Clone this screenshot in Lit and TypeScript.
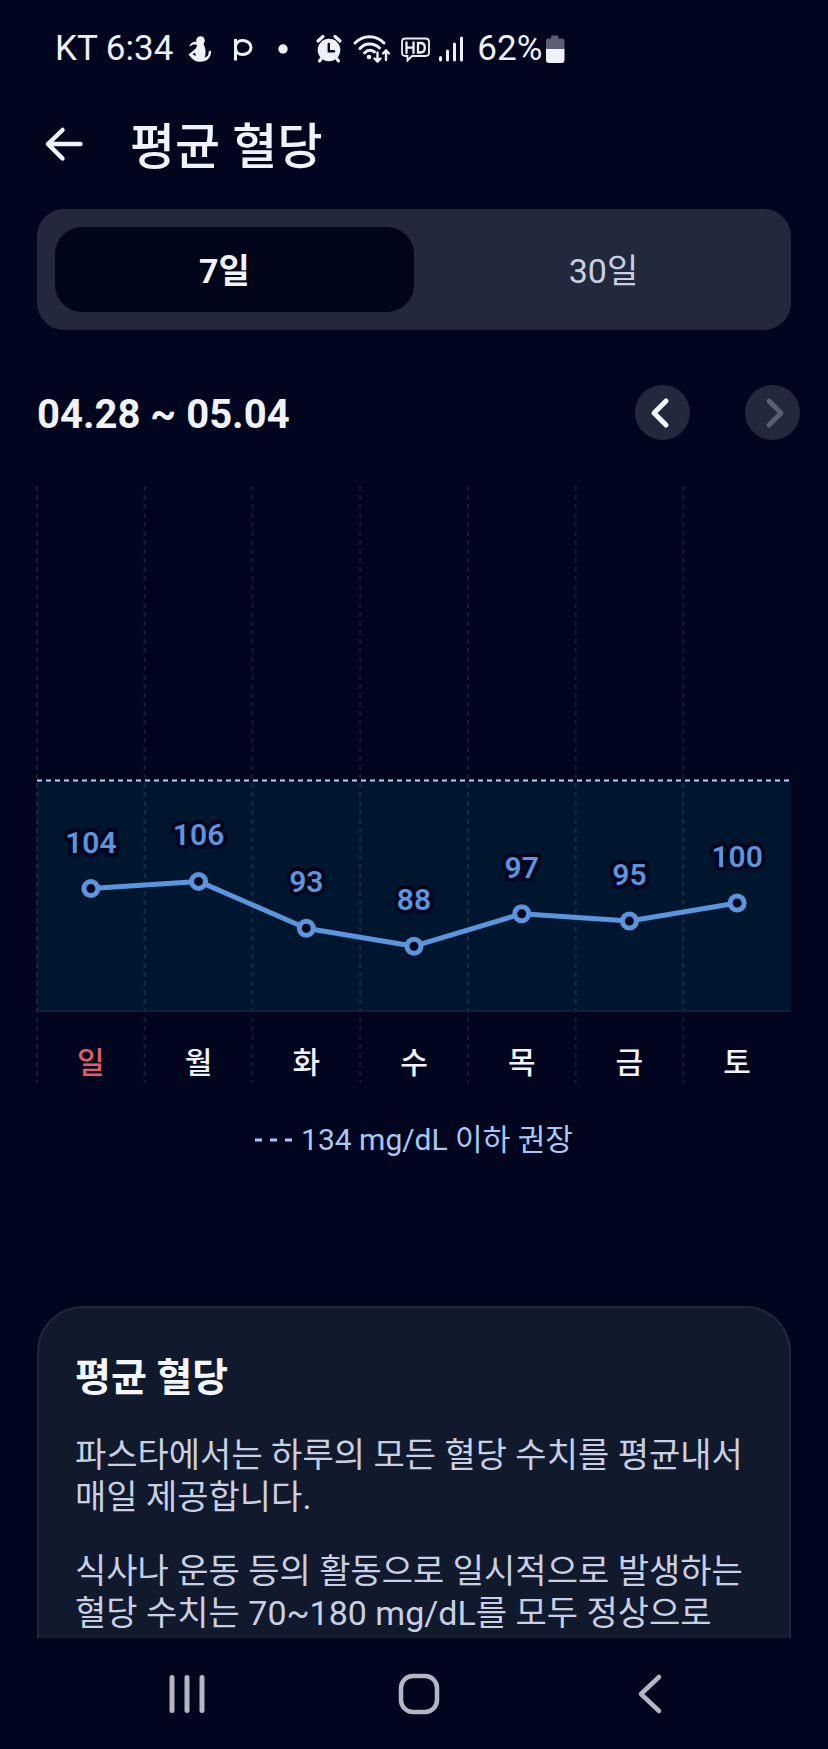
import { LitElement, html, svg, css } from "lit";
import { customElement, state } from "lit/decorators.js";
import { classMap } from "lit/directives/class-map.js";

interface Reading {
  day: string;
  value: number;
  holiday?: boolean;
}

const WEEK: Reading[] = [
  { day: "일", value: 104, holiday: true },
  { day: "월", value: 106 },
  { day: "화", value: 93 },
  { day: "수", value: 88 },
  { day: "목", value: 97 },
  { day: "금", value: 95 },
  { day: "토", value: 100 },
];

const LIMIT = 134;
const FLOOR = 70;
const UNIT = 3.6;
const BASELINE = 526;
const CHART_HEIGHT = 598;

const yOf = (value: number) => BASELINE - (value - FLOOR) * UNIT;

@customElement("status-bar")
export class StatusBar extends LitElement {
  static styles = css`
    :host {
      display: flex;
      align-items: center;
      height: 98px;
      padding-left: 55px;
      font-size: 35px;
      line-height: 40px;
      color: #eef0fa;
    }
    svg {
      display: block;
      flex: none;
    }
    .clock {
      margin-right: 12px;
    }
    .apps {
      margin-right: 26px;
    }
    .signals {
      margin-right: 12px;
    }
  `;

  render() {
    return html`
      <span class="clock">KT 6:34</span>
      <svg class="apps" width="104" height="32" viewBox="0 0 104 32" fill="currentColor" aria-hidden="true">
        <circle cx="15.500" cy="7.500" r="4.300" />
        <path d="M12 12C9 11 7 11.500 5.500 13.500L4.500 12.500C6 9.500 9 8 12 9L18.500 10.500C19.500 13.500 21 16 20.500 20C20.500 22 20 23.500 19.500 24.500C22.500 24 24 21.500 23.500 18.500L26 17.500C26.500 22.500 24 26.500 20 28C16 29.500 11 29 7.500 26L3.500 21.500L9 17C10.500 16 12 14 12 12Z" />
        <path d="M7.500 21.500L10 19.500L11 23Z" fill="#01051d" />
        <path d="M50.500 6V27.500M50.500 14.500C50.500 10 53.500 7.500 57.500 7.500C62.300 7.500 66 10.500 66 14.500C66 18.500 62.300 21.500 57.500 21.500C53.500 21.500 50.500 19 50.500 14.500Z" fill="none" stroke="currentColor" stroke-width="3" />
        <circle cx="98" cy="16" r="4.700" />
      </svg>
      <svg class="signals" width="150" height="32" viewBox="0 0 150 32" fill="none" stroke="currentColor" stroke-linecap="round" aria-hidden="true">
        <circle cx="14" cy="17" r="11.300" fill="currentColor" stroke="none" />
        <path d="M3 8L8 3.500M20 3.500L25 8M6 26L4.500 28M22 26L23.500 28" stroke-width="3.200" />
        <path d="M13.800 11V18.200H19" stroke="#01051d" stroke-width="2.400" />
        <path d="M40 10C48 1.500 61 1.500 69 10M45 15.500C50 9.500 59 9.500 64.500 15M49.500 20C52.500 16.800 56 16.500 59.500 19" stroke-width="3" />
        <circle cx="54" cy="24" r="2.300" fill="currentColor" stroke="none" />
        <path d="M62.500 19.500V28M59.500 25.500L62.500 28.500L65.500 25.500M71 27V18M68 20.500L71 17.500L74 20.500" stroke-width="2.400" />
        <path d="M90.500 5.500H110.500C112.700 5.500 114 6.800 114 9V19.500C114 21.700 112.700 23 110.500 23H97L92.500 27.500V23H90.500C88.300 23 87 21.700 87 19.500V9C87 6.800 88.300 5.500 90.500 5.500Z" stroke-width="1.800" />
        <path d="M91.500 9.500V20M98.500 9.500V20M91.500 14.600H98.500M103 10V19.500H105.500C108.500 19.500 109.800 17.800 109.800 14.800C109.800 11.800 108.500 10 105.500 10Z" stroke-width="2.300" />
        <path d="M125.500 24.500V27M132.500 18V27M139.500 11V27M146.500 5V27" stroke-width="3" />
      </svg>
      <span>62%</span>
      <svg width="25" height="32" viewBox="0 0 25 32" aria-hidden="true">
        <path d="M6 5.500H9V4C9 3.200 9.500 2.500 10.500 2.500H15C16 2.500 16.500 3.200 16.500 4V5.500H20C21.500 5.500 22.500 6.500 22.500 8V16H4V8C4 6.500 4.800 5.500 6 5.500Z" fill="#5c5f72" />
        <path d="M4 16H22.500V27C22.500 29 21.500 30 19.500 30H7C5 30 4 29 4 27Z" fill="currentColor" />
      </svg>
    `;
  }
}

@customElement("glucose-chart")
export class GlucoseChart extends LitElement {
  static styles = css`
    :host {
      display: block;
    }
    .plot {
      display: block;
      width: 100%;
      overflow: visible;
    }
    .band {
      fill: #00162f;
    }
    .guide {
      stroke: #ffffff;
      stroke-opacity: 0.09;
      stroke-width: 2;
      stroke-dasharray: 5 4;
    }
    .base {
      stroke: #121e36;
      stroke-width: 2;
    }
    .limit {
      stroke: #b6d2fb;
      stroke-width: 2;
      stroke-dasharray: 5 4;
    }
    .segment {
      stroke: #5b95de;
      stroke-width: 5;
    }
    .dot {
      fill: #01051d;
      stroke: #5b95de;
      stroke-width: 5;
    }
    .value {
      font-size: 30px;
      font-weight: 600;
      fill: #5b95de;
      stroke: #01051d;
      stroke-width: 8;
      stroke-linejoin: round;
      paint-order: stroke;
      text-anchor: middle;
    }
    .day {
      font-size: 30px;
      font-weight: 500;
      fill: #f0f3fd;
      text-anchor: middle;
    }
    .holiday {
      fill: #e25c69;
    }
    .legend {
      display: flex;
      align-items: center;
      justify-content: center;
      gap: 8px;
      margin: 37px 0 0;
      font-size: 30px;
      line-height: 40px;
      color: #a8c9f8;
    }
  `;

  render() {
    const step = 100 / WEEK.length;
    const xOf = (i: number) => `${step * (i + 0.5)}%`;
    return html`
      <svg class="plot" height=${CHART_HEIGHT} role="img" aria-label="요일별 평균 혈당">
        <rect class="band" x="0" y=${yOf(LIMIT)} width="100%" height=${BASELINE - yOf(LIMIT)} />
        ${WEEK.map((_, i) => svg`<line class="guide" x1="${step * i}%" x2="${step * i}%" y1="1" y2=${CHART_HEIGHT} />`)}
        <line class="base" x1="0" x2="100%" y1=${BASELINE} y2=${BASELINE} />
        <line class="limit" x1="0" x2="100%" y1=${yOf(LIMIT)} y2=${yOf(LIMIT)} />
        ${WEEK.slice(1).map(
          (r, i) => svg`<line class="segment" x1=${xOf(i)} y1=${yOf(WEEK[i].value)} x2=${xOf(i + 1)} y2=${yOf(r.value)} />`
        )}
        ${WEEK.map(
          (r, i) => svg`
            <circle class="dot" cx=${xOf(i)} cy=${yOf(r.value)} r="7" />
            <text class="value" x=${xOf(i)} y=${yOf(r.value) - 36}>${r.value}</text>
            <text class=${classMap({ day: true, holiday: !!r.holiday })} x=${xOf(i)} y="588">${r.day}</text>
          `
        )}
      </svg>
      <p class="legend">
        <svg width="38" height="4" viewBox="0 0 38 4" aria-hidden="true">
          <path d="M0 2H38" stroke="currentColor" stroke-width="3" stroke-dasharray="7 8" />
        </svg>
        <span>${LIMIT} mg/dL 이하 권장</span>
      </p>
    `;
  }
}

@customElement("app-root")
export class AppRoot extends LitElement {
  static styles = css`
    :host {
      display: flex;
      flex-direction: column;
      height: 100vh;
      box-sizing: border-box;
      background: #01051d;
      color: #f0f3fd;
      font-family: Roboto, "Noto Sans CJK KR", sans-serif;
    }
    button {
      display: flex;
      align-items: center;
      justify-content: center;
      padding: 0;
      border: 0;
      background: none;
      color: inherit;
      font: inherit;
      cursor: pointer;
    }
    svg {
      display: block;
    }
    .appbar {
      display: flex;
      align-items: center;
      gap: 43px;
      height: 96px;
      padding: 0 37px;
    }
    h1 {
      margin: 0;
      padding-top: 4px;
      font-size: 49px;
      font-weight: 500;
      line-height: 64px;
    }
    main {
      flex: 1;
      min-height: 0;
      padding: 15px 37px 0;
      overflow-y: auto;
      scrollbar-width: none;
    }
    .tabs {
      display: grid;
      grid-template-columns: 1fr 1fr;
      padding: 18px;
      border-radius: 27px;
      background: #22293d;
    }
    .tab {
      height: 85px;
      padding: 0 0 2px 20px;
      border-radius: 27px;
      font-size: 34px;
      color: #c9d0e3;
    }
    .tab:first-child {
      padding: 0 20px 2px 0;
    }
    .tab.on {
      background: #01051a;
      color: #f0f3fd;
      font-weight: 700;
    }
    .period {
      display: flex;
      align-items: center;
      justify-content: space-between;
      margin: 55px -9px 45px 0;
    }
    h2 {
      margin: 0;
      padding-top: 4px;
      font-size: 40px;
      font-weight: 700;
      line-height: 48px;
    }
    .steps {
      display: flex;
      gap: 55px;
    }
    .step {
      width: 55px;
      height: 55px;
      border-radius: 50%;
      background: #22293d;
      color: #f3f6ff;
    }
    .step:disabled {
      color: #5a5f71;
      cursor: default;
    }
    .info {
      margin-top: 146px;
      padding: 46px 36px;
      border: 2px solid #1f273a;
      border-radius: 46px;
      background: #11192c;
      color: #c9d0e3;
      font-size: 34px;
      line-height: 42px;
      word-break: keep-all;
    }
    h3 {
      margin: 0 0 32px;
      font-size: 39px;
      font-weight: 700;
      line-height: 48px;
      color: #f3f6ff;
    }
    .info p {
      margin: 0 0 32px;
    }
    .nav {
      display: flex;
      justify-content: center;
      align-items: center;
      gap: 168px;
      height: 111px;
      padding-left: 10px;
      color: #b4b6c4;
    }
    .nav button {
      width: 64px;
      height: 64px;
    }
  `;

  @state() private range = 7;

  render() {
    return html`
      <status-bar></status-bar>
      <header class="appbar">
        <button aria-label="뒤로">
          <svg width="50" height="48" viewBox="0 0 50 48" fill="none" stroke="currentColor" stroke-width="4.500" stroke-linecap="round" stroke-linejoin="round" aria-hidden="true">
            <path d="M43.500 22H11M25.500 8L11 22L25.500 36.500" />
          </svg>
        </button>
        <h1>평균 혈당</h1>
      </header>
      <main>
        <div class="tabs" role="tablist">
          ${[7, 30].map(
            (days) => html`
              <button
                role="tab"
                aria-selected=${this.range === days}
                class=${classMap({ tab: true, on: this.range === days })}
                @click=${() => (this.range = days)}
              >
                ${days}일
              </button>
            `
          )}
        </div>
        <section class="period">
          <h2>04.28 ~ 05.04</h2>
          <div class="steps">
            <button class="step" aria-label="이전 주">
              <svg width="55" height="55" viewBox="0 0 55 55" fill="none" stroke="currentColor" stroke-width="5" stroke-linecap="round" stroke-linejoin="round" aria-hidden="true">
                <path d="M31 16L19 28L31 40" />
              </svg>
            </button>
            <button class="step" aria-label="다음 주" disabled>
              <svg width="55" height="55" viewBox="0 0 55 55" fill="none" stroke="currentColor" stroke-width="5" stroke-linecap="round" stroke-linejoin="round" aria-hidden="true">
                <path d="M24 16L36 28L24 40" />
              </svg>
            </button>
          </div>
        </section>
        <glucose-chart></glucose-chart>
        <article class="info">
          <h3>평균 혈당</h3>
          <p>파스타에서는 하루의 모든 혈당 수치를 평균내서 매일 제공합니다.</p>
          <p>식사나 운동 등의 활동으로 일시적으로 발생하는 혈당 수치는 70~180 mg/dL를 모두 정상으로</p>
        </article>
      </main>
      <nav class="nav">
        <button aria-label="최근 앱">
          <svg width="64" height="64" viewBox="0 0 64 64" fill="none" stroke="currentColor" stroke-width="5" stroke-linecap="round" aria-hidden="true">
            <path d="M17 15.500V48.500M32 15.500V48.500M47 15.500V48.500" />
          </svg>
        </button>
        <button aria-label="홈">
          <svg width="64" height="64" viewBox="0 0 64 64" fill="none" stroke="currentColor" stroke-width="4.500" aria-hidden="true">
            <rect x="14" y="14" width="36" height="36" rx="12" />
          </svg>
        </button>
        <button aria-label="뒤로 가기">
          <svg width="64" height="64" viewBox="0 0 64 64" fill="none" stroke="currentColor" stroke-width="4.500" stroke-linecap="round" stroke-linejoin="round" aria-hidden="true">
            <path d="M40 15L22 32L40 49" />
          </svg>
        </button>
      </nav>
    `;
  }
}
